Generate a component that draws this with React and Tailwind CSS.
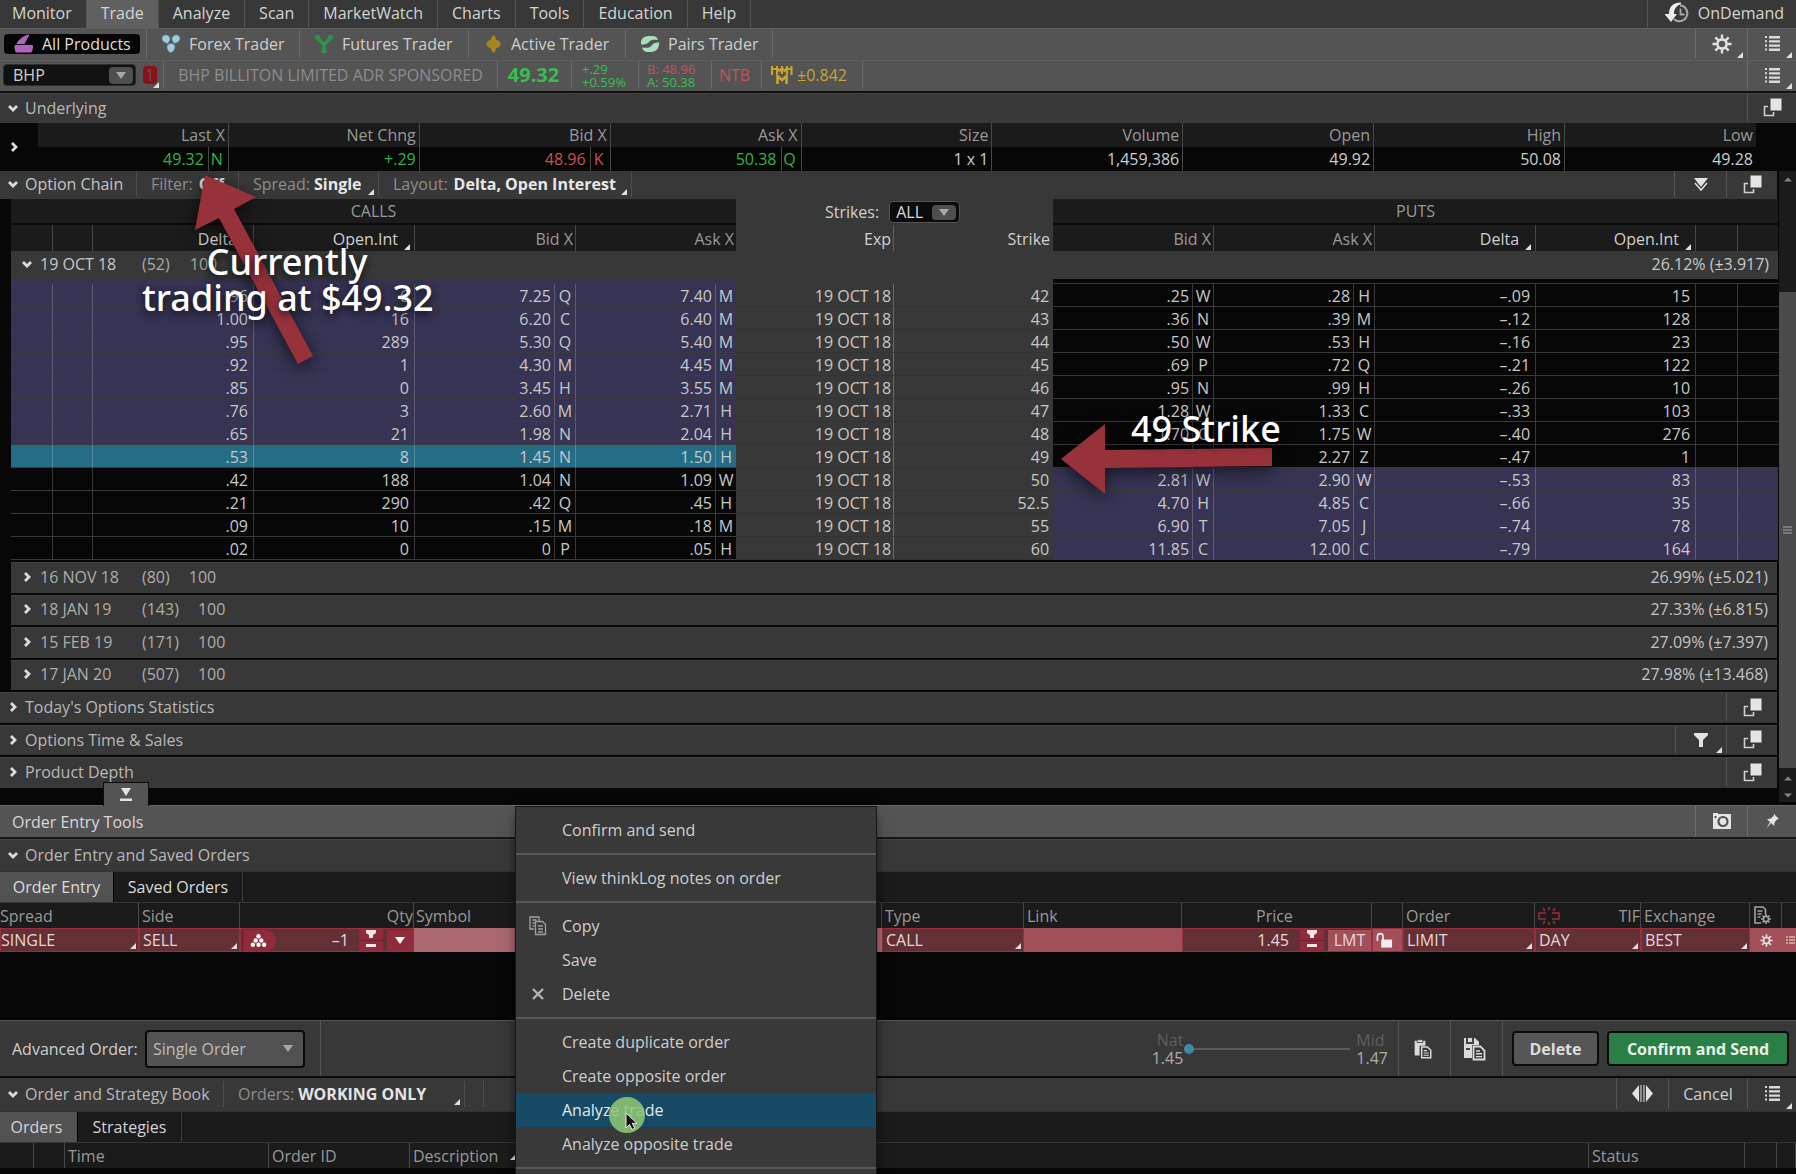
import { useState } from "react"
import clsx from "clsx"

const MENU = ["Monitor", "Trade", "Analyze", "Scan", "MarketWatch", "Charts", "Tools", "Education", "Help"]

const QUOTE = [
  { label: "Last X", value: "49.32", ex: "N", color: "text-[#35b34a]" },
  { label: "Net Chng", value: "+.29", color: "text-[#35b34a]" },
  { label: "Bid X", value: "48.96", ex: "K", color: "text-[#c8505c]" },
  { label: "Ask X", value: "50.38", ex: "Q", color: "text-[#35b34a]" },
  { label: "Size", value: "1 x 1" },
  { label: "Volume", value: "1,459,386" },
  { label: "Open", value: "49.92" },
  { label: "High", value: "50.08" },
  { label: "Low", value: "49.28" },
]

// delta, open int, bid, x, ask, x | strike | bid, x, ask, x, delta, open int
const CHAIN = [
  [".96", "6", "7.25", "Q", "7.40", "M", "42", ".25", "W", ".28", "H", "–.09", "15"],
  ["1.00", "16", "6.20", "C", "6.40", "M", "43", ".36", "N", ".39", "M", "–.12", "128"],
  [".95", "289", "5.30", "Q", "5.40", "M", "44", ".50", "W", ".53", "H", "–.16", "23"],
  [".92", "1", "4.30", "M", "4.45", "M", "45", ".69", "P", ".72", "Q", "–.21", "122"],
  [".85", "0", "3.45", "H", "3.55", "M", "46", ".95", "N", ".99", "H", "–.26", "10"],
  [".76", "3", "2.60", "M", "2.71", "H", "47", "1.28", "W", "1.33", "C", "–.33", "103"],
  [".65", "21", "1.98", "N", "2.04", "H", "48", "1.70", "C", "1.75", "W", "–.40", "276"],
  [".53", "8", "1.45", "N", "1.50", "H", "49", "", "", "2.27", "Z", "–.47", "1"],
  [".42", "188", "1.04", "N", "1.09", "W", "50", "2.81", "W", "2.90", "W", "–.53", "83"],
  [".21", "290", ".42", "Q", ".45", "H", "52.5", "4.70", "H", "4.85", "C", "–.66", "35"],
  [".09", "10", ".15", "M", ".18", "M", "55", "6.90", "T", "7.05", "J", "–.74", "78"],
  [".02", "0", "0", "P", ".05", "H", "60", "11.85", "C", "12.00", "C", "–.79", "164"],
]

const EXPIRATIONS = [
  { date: "16 NOV 18", days: "(80)", iv: "26.99% (±5.021)" },
  { date: "18 JAN 19", days: "(143)", iv: "27.33% (±6.815)" },
  { date: "15 FEB 19", days: "(171)", iv: "27.09% (±7.397)" },
  { date: "17 JAN 20", days: "(507)", iv: "27.98% (±13.468)" },
]

function Chevron({ open }) {
  return (
    <svg width="10" height="10" viewBox="0 0 10 10" fill="none" stroke="#dcdcdc" strokeWidth="2.8" className="shrink-0">
      {open ? <path d="M1 3l4 4 4-4" /> : <path d="M3 1l4 4-4 4" />}
    </svg>
  )
}

function Corner({ className }) {
  return (
    <svg width="6" height="6" viewBox="0 0 6 6" fill="#e0e0e0" className={clsx("shrink-0", className)}>
      <path d="M6 0v6H0z" />
    </svg>
  )
}

function Down({ fill = "#a8a8a8" }) {
  return (
    <svg width="10" height="7" viewBox="0 0 10 7" fill={fill}>
      <path d="M0 0h10L5 7z" />
    </svg>
  )
}

function PopOut() {
  return (
    <svg width="19" height="19" viewBox="0 0 19 19">
      <path d="M5 8.5H1.5v9h9V14" fill="none" stroke="#cfcfcf" strokeWidth="1.6" />
      <path d="M7.5 0.5h11v12h-11z" fill="#e4e4e4" />
    </svg>
  )
}

function ListIcon() {
  return (
    <svg width="15" height="15" viewBox="0 0 15 15" fill="#d9d9d9">
      <path d="M0 0h2v2H0zM4 0h11v2.4H4zM0 4.2h2v2H0zM4 4.2h11v2.4H4zM0 8.4h2v2H0zM4 8.4h11v2.4H4zM0 12.6h2v2H0zM4 12.6h11V15H4z" />
    </svg>
  )
}

function Gear({ size = 20 }) {
  return (
    <svg width={size} height={size} viewBox="0 0 20 20" fill="none" stroke="#e4e4e4">
      <circle cx="10" cy="10" r="4.6" strokeWidth="2.6" />
      <path
        strokeWidth="2.4"
        d="M10 .5v4M10 15.5v4M.5 10h4M15.5 10h4M3.3 3.3l2.8 2.8M13.9 13.9l2.8 2.8M3.3 16.7l2.8-2.8M13.9 6.1l2.8-2.8"
      />
    </svg>
  )
}

function PotIcon() {
  return (
    <svg width="20" height="19" viewBox="0 0 20 19" fill="#b063c0">
      <path d="M2.5 10C3 7 9 2 14 0.5c1-.3 1.5.3 1 1.2L11.500 8l-1 2z" />
      <path d="M2 11h15.500c1.200 0 1.800.6 1.600 2l-.7 3.500c-.3 1.400-1 2-2.300 2H3.200c-1.300 0-2-.6-2.200-2L.5 13C.4 11.600.9 11 2 11z" />
    </svg>
  )
}

function ForexIcon() {
  return (
    <svg width="20" height="19" viewBox="0 0 20 19" fill="#9ccbe4" stroke="#6c8795" strokeWidth=".6">
      <path d="M4.700 1C7.300 1 9 2.700 9 5c0 1.600-1.300 3-2.200 4.300C5 9.500 1 7.500 1 4.600 1 2.600 2.600 1 4.700 1z" />
      <path d="M15.300 1C12.700 1 11 2.700 11 5c0 1.600 1.300 3 2.200 4.300C15 9.500 19 7.500 19 4.600 19 2.600 17.400 1 15.300 1z" />
      <path d="M10 9.500c2.300 0 4 1.500 4 3.400 0 2.200-2.600 5.600-4.300 5.600S6 15 6 12.900c0-1.900 1.700-3.400 4-3.400z" />
    </svg>
  )
}

function FuturesIcon() {
  return (
    <svg width="20" height="20" viewBox="0 0 20 20" fill="#2f9450" stroke="#2f9450">
      <path d="M3.500 4L10 10.500 16.500 4M10 10v7" strokeWidth="3.400" fill="none" />
      <circle cx="3.300" cy="3.200" r="2.500" stroke="none" />
      <circle cx="16.700" cy="3.200" r="2.500" stroke="none" />
      <circle cx="10" cy="17" r="2.600" stroke="none" />
    </svg>
  )
}

function ActiveIcon() {
  return (
    <svg width="15" height="18" viewBox="0 0 15 18" fill="#a58424">
      <path d="M7.500 0l2 2 .5 2.500 3 1.500L15 9l-2 3-3 1.500L9.500 16l-2 2-2-2L5 13.500 2 12 0 9l2-3 3-1.500L5.500 2z" />
    </svg>
  )
}

function PairsIcon() {
  return (
    <svg width="20" height="18" viewBox="0 0 20 18">
      <path d="M1 9.500C.2 4 4 1 9 1h3c3.500 0 5.500 1.500 6 4-4-.7-7-.5-8.700 1.500C8 8.200 6 9.700 1 9.500z" fill="#a8e0bd" />
      <path d="M19 7.500c.8 5.500-3 9.500-8 9.500H8c-3.500 0-5.500-2-6-4.500 4 .7 7.500.5 9.200-1.500 1.500-1.900 3-3.500 7.800-3.500z" fill="#a8e0bd" />
    </svg>
  )
}

function OnDemandIcon() {
  return (
    <svg width="26" height="22" viewBox="0 0 26 22" fill="none">
      <path d="M16 3.200a8 8 0 1 1-6 14" stroke="#a9a9a9" strokeWidth="2" />
      <path d="M16.500 6.500v6h4" stroke="#a9a9a9" strokeWidth="1.800" />
      <path d="M17 .5C9 .5 5 4.500 5 12H.5l6.500 8 6-8H10c0-5 2-8 7-10z" fill="#ececec" />
    </svg>
  )
}

function Docs({ save }) {
  return (
    <svg width="19" height="24" viewBox="0 0 23 24" fill="none" className={save ? "w-[23px]" : "w-[19px]"}>
      <path d={save ? "M1 1h11l4 4v3H9v13H1z" : "M2 2h13v6H8v12H2z"} fill="#dadada" />
      {save ? (
        <path d="M4 1v5h6V1M3 12h4" stroke="#444" strokeWidth="2" />
      ) : (
        <path d="M5 .8h7v3.400H5z" fill="#dadada" stroke="#3a3a3a" />
      )}
      <path d="M10.500 9.500h7l4 4v9h-11z" fill="#3a3a3a" stroke="#dadada" strokeWidth="1.800" />
      <path d="M13 14h4M13 16.800h6M13 19.600h6" stroke="#dadada" strokeWidth="1.400" />
    </svg>
  )
}

function PlusMinus() {
  return (
    <span className="flex h-[22px] w-6 flex-col gap-px bg-[#73202e]">
      <span className="flex flex-1 items-center justify-center bg-[#8f2b3a]">
        <svg width="10" height="8" viewBox="0 0 10 8" fill="#f0e4e6">
          <path d="M0 0h10v3L7 5v3H3V5L0 3z" />
        </svg>
      </span>
      <span className="flex flex-1 items-center justify-center bg-[#8f2b3a]">
        <span className="h-[3px] w-[10px] bg-[#f0e4e6]" />
      </span>
    </span>
  )
}

// small icon box at the right end of a bar
function BarButton({ label, children, corner, className }) {
  return (
    <button
      aria-label={label}
      className={clsx("relative flex items-center justify-center self-stretch border-l border-white/15", className)}
    >
      {children}
      {corner && <Corner className="absolute right-1 bottom-0" />}
    </button>
  )
}

function Gadget({ title, open, children }) {
  return (
    <div className="flex items-center border-t border-[#444] bg-[#383838] pb-0.5 pl-2 text-[#b8b8b8]">
      <Chevron open={open} />
      <span className="ml-[7px]">{title}</span>
      <span className="flex-1" />
      {children}
    </div>
  )
}

function TopBars() {
  const [symbol, setSymbol] = useState("BHP")

  return (
    <header>
      <nav className="flex h-7 items-stretch bg-[#383838]">
        {MENU.map((item) => (
          <a
            key={item}
            href="#"
            className={clsx(
              "flex items-center border-r border-[#555] px-3.5 pb-0.5 text-[#d4d4d4] first:pl-3",
              item === "Trade" && "bg-[#606060]"
            )}
          >
            {item}
          </a>
        ))}
        <a href="#" className="ml-auto flex items-center gap-2 border-l border-[#555] pr-3 pb-0.5 pl-4 text-[#d4d4d4]">
          <OnDemandIcon />
          OnDemand
        </a>
      </nav>

      <div className="flex h-8 items-center border-t border-[#5e5e5e] bg-[#545454] pb-0.5 text-[#cfcfcf]">
        <button className="mr-1.5 ml-1 flex h-5 w-[136px] items-center gap-2 rounded bg-[#060606] pl-2.5 text-[#dedede]">
          <PotIcon />
          All Products
        </button>
        <button className="flex h-7 w-[153px] items-center gap-2 border-l border-[#6b6b6b] pl-3.5">
          <ForexIcon />
          Forex Trader
        </button>
        <button className="flex h-7 w-[169px] items-center gap-2 border-l border-[#6b6b6b] pl-3.5">
          <FuturesIcon />
          Futures Trader
        </button>
        <button className="flex h-7 w-[157px] items-center gap-2.5 border-l border-[#6b6b6b] pl-[17px]">
          <ActiveIcon />
          Active Trader
        </button>
        <button className="flex h-7 w-[148px] items-center gap-2 border-x border-[#6b6b6b] pl-3.5">
          <PairsIcon />
          Pairs Trader
        </button>
        <span className="flex-1" />
        <BarButton label="Settings" corner className="w-[52px]">
          <Gear />
        </BarButton>
        <BarButton label="Toolbar menu" corner className="w-[49px]">
          <ListIcon />
        </BarButton>
      </div>

      <div className="flex h-[33px] items-center border-t border-b-2 border-t-[#5e5e5e] border-b-[#121212] bg-[#545454] pb-0.5">
        <div className="ml-[3px] flex h-[22px] w-[133px] items-center rounded-sm border border-[#2c2c2c] bg-[#111] pr-0.5">
          <input
            aria-label="Symbol"
            value={symbol}
            onChange={(e) => setSymbol(e.target.value)}
            className="w-0 flex-1 bg-transparent pl-[9px] text-[#cfcfcf] outline-none"
          />
          <button aria-label="Recent symbols" className="flex h-[17px] w-6 items-center justify-center rounded-sm bg-[#4f4f4f]">
            <Down />
          </button>
        </div>
        <button className="relative ml-[7px] h-[18px] w-[14px] rounded-sm bg-[#8c1119] leading-[18px] text-[#565656]">
          1
          <Corner className="absolute -right-0.5 -bottom-1" />
        </button>
        <span className="ml-1.5 w-[334px] border-l border-[#6b6b6b] text-center leading-7 text-[#8d8d8d]">
          BHP BILLITON LIMITED ADR SPONSORED
        </span>
        <span className="w-[74px] border-l border-[#6b6b6b] pr-0.5 text-center text-xl leading-7 font-bold text-[#38bd50]">
          49.32
        </span>
        <span className="h-7 w-[67px] border-l border-[#6b6b6b] pt-0.5 pl-2.5 text-[13px] leading-[13px] text-[#38bd50]">
          +.29
          <br />
          +0.59%
        </span>
        <span className="h-7 w-[73px] border-l border-[#6b6b6b] pt-0.5 pl-2 text-[13px] leading-[13px] text-[#38bd50]">
          <span className="text-[#c8505c]">B: 48.96</span>
          <br />
          A: 50.38
        </span>
        <span className="w-[50px] border-l border-[#6b6b6b] pr-1 text-center leading-7 text-[#c8505c]">NTB</span>
        <span className="flex h-7 w-[102px] items-center gap-1 border-x border-[#6b6b6b] pl-2 text-[#c9a52c]">
          <svg width="23" height="18" viewBox="0 0 23 18" fill="none" stroke="#c9a52c" strokeWidth="2">
            <path d="M2 0v9M2 3h5M7 0v8M7 2l2.500 3L12 2M12 0v8M12 2l2.500 3L17 2M17 0v8M17 3h4.500M21.500 0v9" />
            <path d="M7.500 18v-8l4.500 4 4.500-4v8" strokeWidth="2.600" />
          </svg>
          ±0.842
        </span>
        <span className="flex-1" />
        <BarButton label="Symbol menu" corner className="w-[49px]">
          <ListIcon />
        </BarButton>
      </div>
    </header>
  )
}

function Underlying() {
  return (
    <section>
      <div className="grid h-[30px]">
        <Gadget title="Underlying" open>
          <BarButton label="Detach" className="w-[49px]">
            <PopOut />
          </BarButton>
        </Gadget>
      </div>
      <div className="flex bg-[#070707]">
        <button aria-label="Expand quote" className="flex w-[38px] items-center pl-[9px]">
          <Chevron />
        </button>
        <div className="min-w-0 flex-1">
          <table className="w-full table-fixed border-separate border-spacing-0 text-right">
            <thead>
              <tr className="h-6 bg-[#1b1b1b] text-[#999]">
                {QUOTE.map((q) => (
                  <th key={q.label} className="border-r border-[#484848] p-0 pr-[3px] font-normal last:border-r-0">
                    {q.label}
                  </th>
                ))}
              </tr>
            </thead>
            <tbody>
              <tr className="h-6 text-[#cdcdcd]">
                {QUOTE.map((q) => (
                  <td
                    key={q.label}
                    className={clsx("border-r border-[#484848] p-0 pr-[3px] leading-6 last:border-r-0", q.color)}
                  >
                    {q.value}
                    {q.ex && (
                      <span className="ml-1 inline-block w-[17px] border-l border-[#484848] text-center">{q.ex}</span>
                    )}
                  </td>
                ))}
              </tr>
            </tbody>
          </table>
        </div>
        <span className="w-10" />
      </div>
    </section>
  )
}

function ChainRow({ row }) {
  const strike = Number(row[6])
  const callBg = strike === 49 ? "bg-[#256d86]" : strike < 49 ? "bg-[#363353]" : "bg-[#070707]"
  const putBg = strike > 49 ? "bg-[#363353]" : "bg-[#070707]"
  const side = "border-r border-b border-r-white/20 p-0 pt-0.5"
  const call = clsx(side, callBg, strike > 49 ? "border-b-[#3a3a3a]" : "border-b-[#3a3a3f]")
  const put = clsx(side, putBg, "border-b-[#3a3a3a]")
  const mid = "border-b border-b-[#333] bg-[#383838] p-0 pt-0.5"

  return (
    <tr className="h-[23px]">
      <td className={call} />
      <td className={call} />
      <td className={clsx(call, "pr-[5px]")}>{row[0]}</td>
      <td className={clsx(call, "pr-[5px]")}>{row[1]}</td>
      <td className={clsx(call, "pr-[3px]")}>{row[2]}</td>
      <td className={clsx(call, "text-center")}>{row[3]}</td>
      <td className={clsx(call, "pr-[3px]")}>{row[4]}</td>
      <td className={clsx(call, "border-r-0 text-center")}>{row[5]}</td>
      <td className={clsx(mid, "border-r border-r-white/25 pr-0.5")}>19 OCT 18</td>
      <td className={clsx(mid, "pr-1")}>{row[6]}</td>
      <td className={clsx(put, "pr-[3px]")}>{row[7]}</td>
      <td className={clsx(put, "text-center")}>{row[8]}</td>
      <td className={clsx(put, "pr-[3px]")}>{row[9]}</td>
      <td className={clsx(put, "text-center")}>{row[10]}</td>
      <td className={clsx(put, "pr-[5px]")}>{row[11]}</td>
      <td className={clsx(put, "pr-[5px]")}>{row[12]}</td>
      <td className={put} />
      <td className={clsx(put, "border-r-0")} />
    </tr>
  )
}

function OptionChain() {
  const [strikes, setStrikes] = useState("ALL")
  const dark = "border-r border-[#484848] bg-[#1b1b1b] p-0 pt-0.5 pr-0.5 font-normal"

  return (
    <>
      <div className="flex h-7 items-center bg-[#383838] pb-0.5 pl-2 text-[#c4c4c4]">
        <Chevron open />
        <span className="ml-[7px] w-[111px]">Option Chain</span>
        <button className="flex h-[26px] w-[102px] items-center gap-1.5 border-l border-[#4e4e4e] pl-3.5 text-[#8e8e8e]">
          Filter: <b className="text-[#e4e4e4]">Off</b>
        </button>
        <button className="relative flex h-[26px] w-[140px] items-center gap-1 border-l border-[#4e4e4e] pl-3.5 text-[#8e8e8e]">
          Spread: <b className="text-[#e8e8e8]">Single</b>
          <Corner className="absolute right-1 bottom-0.5" />
        </button>
        <button className="relative flex h-[26px] w-[254px] items-center gap-1.5 border-x border-[#4e4e4e] pl-3.5 whitespace-nowrap text-[#8e8e8e]">
          Layout: <b className="text-[#e8e8e8]">Delta, Open Interest</b>
          <Corner className="absolute right-1 bottom-0.5" />
        </button>
        <span className="flex-1" />
        <BarButton label="Collapse all" className="w-[52px]">
          <svg width="16" height="15" viewBox="0 0 16 15">
            <path d="M1 1h14L8 10z" fill="#e2e2e2" />
            <path d="M2 6l6 7 6-7" fill="none" stroke="#e2e2e2" strokeWidth="1.500" />
          </svg>
        </BarButton>
        <BarButton label="Detach" className="w-[51px]">
          <PopOut />
        </BarButton>
      </div>

      <div className="pl-[11px]">
        <table className="w-full table-fixed border-separate border-spacing-0 text-right text-[#c8c8c8]">
          <colgroup>
            <col className="w-[42px]" />
            <col className="w-10" />
            <col className="w-[161px]" />
            <col className="w-[161px]" />
            <col className="w-[140px]" />
            <col className="w-[21px]" />
            <col className="w-[140px]" />
            <col className="w-5" />
            <col className="w-[158px]" />
            <col className="w-[159px]" />
            <col className="w-[140px]" />
            <col className="w-[21px]" />
            <col className="w-[140px]" />
            <col className="w-[21px]" />
            <col className="w-[161px]" />
            <col className="w-[160px]" />
            <col className="w-[42px]" />
            <col className="w-10" />
          </colgroup>
          <thead>
            <tr className="h-[26px] text-center text-[#999]">
              <th colSpan={8} className="border-b-2 border-[#0c0c0c] bg-[#1b1b1b] p-0 font-normal">
                CALLS
              </th>
              <th colSpan={2} className="bg-[#383838] p-0 font-normal text-[#d0d0d0]">
                <div className="flex items-center justify-center gap-2.5 pr-1">
                  <label htmlFor="strikes">Strikes:</label>
                  <span className="relative flex items-center">
                    <select
                      id="strikes"
                      value={strikes}
                      onChange={(e) => setStrikes(e.target.value)}
                      className="h-[22px] w-[71px] appearance-none rounded-sm border border-[#555] bg-[#0b0b0b] pl-1.5 leading-5 text-[#dcdcdc]"
                    >
                      <option>ALL</option>
                      <option>10</option>
                      <option>4</option>
                    </select>
                    <span className="pointer-events-none absolute right-1 flex h-[15px] w-6 items-center justify-center rounded-sm bg-[#4f4f4f]">
                      <Down />
                    </span>
                  </span>
                </div>
              </th>
              <th colSpan={8} className="border-b-2 border-[#0c0c0c] bg-[#1b1b1b] p-0 font-normal">
                PUTS
              </th>
            </tr>
            <tr className="h-[26px] text-[#999]">
              <th className={dark} />
              <th className={dark} />
              <th className={clsx(dark, "text-[#cfcfcf]")}>
                Delta
                <Corner className="mr-0.5 ml-1.5 inline align-text-bottom" />
              </th>
              <th className={clsx(dark, "text-[#cfcfcf]")}>
                Open.Int
                <Corner className="mr-0.5 ml-1.5 inline align-text-bottom" />
              </th>
              <th colSpan={2} className={dark}>Bid X</th>
              <th colSpan={2} className={clsx(dark, "border-r-0")}>Ask X</th>
              <th className="border-r border-[#606060] bg-[#383838] p-0 pt-0.5 pr-0.5 font-normal text-[#d0d0d0]">Exp</th>
              <th className="bg-[#383838] p-0 pt-0.5 pr-[3px] font-normal text-[#d0d0d0]">Strike</th>
              <th colSpan={2} className={dark}>Bid X</th>
              <th colSpan={2} className={dark}>Ask X</th>
              <th className={clsx(dark, "text-[#cfcfcf]")}>
                Delta
                <Corner className="mr-0.5 ml-1.5 inline align-text-bottom" />
              </th>
              <th className={clsx(dark, "text-[#cfcfcf]")}>
                Open.Int
                <Corner className="mr-0.5 ml-1.5 inline align-text-bottom" />
              </th>
              <th className={dark} />
              <th className={clsx(dark, "border-r-0")} />
            </tr>
          </thead>
          <tbody>
            <tr className="h-7">
              <td colSpan={18} className="bg-[#383838] p-0 pb-0.5">
                <div className="flex items-center pr-[9px] pl-[11px]">
                  <Chevron open />
                  <span className="ml-2 w-[102px] text-left">19 OCT 18</span>
                  <span className="text-[#a9a9a9]">(52)</span>
                  <span className="ml-5 text-[#a9a9a9]">100</span>
                  <span className="ml-auto">26.12% (±3.917)</span>
                </div>
              </td>
            </tr>
            <tr className="h-[5px]">
              <td colSpan={8} className="border-b border-[#3a3a3f] bg-[#363353] p-0" />
              <td colSpan={2} className="bg-[#383838] p-0" />
              <td colSpan={8} className="border-b border-[#3a3a3a] bg-[#070707] p-0" />
            </tr>
            {CHAIN.map((row) => (
              <ChainRow key={row[6]} row={row} />
            ))}
          </tbody>
        </table>
      </div>

      <div className="mt-0.5 grid h-[226px] auto-rows-fr gap-0.5">
        {EXPIRATIONS.map((e) => (
          <div
            key={e.date}
            className="ml-[11px] flex items-center border-t border-[#424242] bg-[#383838] pr-[9px] pb-0.5 pl-[11px] text-[#adadad]"
          >
            <Chevron />
            <span className="ml-2 w-[102px]">{e.date}</span>
            <span>{e.days}</span>
            <span className="ml-[19px]">100</span>
            <span className="ml-auto text-[#c4c4c4]">{e.iv}</span>
          </div>
        ))}
        <Gadget title="Today's Options Statistics">
          <BarButton label="Detach" className="w-[51px]">
            <PopOut />
          </BarButton>
        </Gadget>
        <Gadget title="Options Time & Sales">
          <BarButton label="Filter" corner className="w-[51px]">
            <svg width="14" height="14" viewBox="0 0 14 14" fill="#e2e2e2">
              <path d="M0 0h14v2L9 7v7H5V7L0 2z" />
            </svg>
          </BarButton>
          <BarButton label="Detach" className="w-[51px]">
            <PopOut />
          </BarButton>
        </Gadget>
        <Gadget title="Product Depth">
          <BarButton label="Detach" className="w-[51px]">
            <PopOut />
          </BarButton>
        </Gadget>
      </div>
    </>
  )
}

function ScrollBar() {
  const up = "M0 5h10L5 0z"
  const down = "M0 0h10L5 5z"
  return (
    <div className="ml-0.5 flex w-[17px] flex-col items-center bg-[#1b1b1b] pt-1.5">
      <svg width="8" height="5" viewBox="0 0 10 5" fill="#858585"><path d={up} /></svg>
      <div className="mt-[110px] flex w-full flex-1 items-center justify-center bg-[#4b4b4b]">
        <svg width="9" height="8" viewBox="0 0 9 8" stroke="#888" strokeWidth="1.500"><path d="M0 1h9M0 4h9M0 7h9" /></svg>
      </div>
      <div className="flex h-[34px] flex-col items-center justify-between pt-2 pb-1">
        <svg width="8" height="5" viewBox="0 0 10 5" fill="#858585"><path d={up} /></svg>
        <svg width="8" height="5" viewBox="0 0 10 5" fill="#858585"><path d={down} /></svg>
      </div>
    </div>
  )
}

function OrderEntry() {
  const [type, setType] = useState("Single Order")
  const [price, setPrice] = useState(0)
  const th = "border-r border-[#484848] p-0 text-left font-normal last:border-r-0"
  const cell = "relative border border-[#95303d] bg-[#643036] p-0"

  return (
    <section>
      <div className="relative flex h-[34px] items-center border-t border-b-2 border-t-[#666] border-b-[#161616] bg-[#545454] pl-3 text-[#d8d8d8]">
        <button
          aria-label="Collapse order entry"
          className="absolute -top-6 left-[103px] flex h-6 w-[46px] items-center justify-center border border-b-0 border-[#0c0c0c] bg-[#545454]"
        >
          <svg width="12" height="14" viewBox="0 0 12 14" fill="#e4e4e4">
            <path d="M1 0h10L6 8zM0 10.500h12V13H0z" />
          </svg>
        </button>
        <span className="flex-1">Order Entry Tools</span>
        <BarButton label="Snapshot" className="w-[52px]">
          <svg width="20" height="17" viewBox="0 0 20 17">
            <path d="M1 2V0h5v1h13v15H1z" fill="#e4e4e4" />
            <circle cx="11" cy="8.500" r="4.500" fill="none" stroke="#505050" strokeWidth="2.200" />
            <path d="M2.500 3h2v2h-2z" fill="#505050" />
          </svg>
        </BarButton>
        <BarButton label="Pin" className="w-[49px]">
          <svg width="13" height="15" viewBox="0 0 13 15" fill="#e4e4e4">
            <path d="M8 0l5 5-2 .5L8.500 8.500 8.200 12 5 9l-4.500 5.500L4 8 1 5l3.500-.3L7.500 2z" />
          </svg>
        </BarButton>
      </div>
      <div className="grid h-8">
        <Gadget title="Order Entry and Saved Orders" open />
      </div>
      <div className="flex h-8 items-stretch border-y border-[#333] bg-[#1b1b1b] text-[#dcdcdc]">
        <button className="w-[114px] border-r border-black bg-[#525252]">Order Entry</button>
        <button className="w-[129px] border-r border-[#3c3c3c]">Saved Orders</button>
      </div>
      <div className="h-[117px] bg-[#070707]">
        <table className="w-full table-fixed border-separate border-spacing-0">
          <colgroup>
            <col className="w-[139px]" />
            <col className="w-[101px]" />
            <col className="w-[174px]" />
            <col className="w-[105px]" />
            <col className="w-[363px]" />
            <col className="w-[142px]" />
            <col className="w-[158px]" />
            <col className="w-[190px]" />
            <col className="w-[31px]" />
            <col className="w-[132px]" />
            <col className="w-[106px]" />
            <col className="w-[109px]" />
            <col className="w-8" />
            <col className="w-[14px]" />
          </colgroup>
          <thead>
            <tr className="h-[25px] bg-[#1b1b1b] text-[#999]">
              <th className={th}>Spread</th>
              <th className={clsx(th, "pl-[3px]")}>Side</th>
              <th className={clsx(th, "text-right")}>Qty</th>
              <th className={clsx(th, "pl-0.5")}>Symbol</th>
              <th className={th} />
              <th className={clsx(th, "pl-[3px]")}>Type</th>
              <th className={clsx(th, "pl-[3px]")}>Link</th>
              <th className={clsx(th, "pl-[74px]")}>Price</th>
              <th className={th} />
              <th className={clsx(th, "pl-[3px]")}>Order</th>
              <th className={clsx(th, "pl-[3px]")}>
                <span className="flex items-center justify-between">
                  <svg width="22" height="18" viewBox="0 0 22 18" fill="none" stroke="#9e2c3a" strokeWidth="1.500">
                    <path d="M8 6H1v6h7M14 6h7v6h-7M5 1l2 3M11 0v3M17 1l-2 3M5 17l2-3M11 18v-3M17 17l-2-3" />
                  </svg>
                  TIF
                </span>
              </th>
              <th className={clsx(th, "pl-[3px]")}>Exchange</th>
              <th className={clsx(th, "pl-1")}>
                <svg width="18" height="19" viewBox="0 0 18 19" fill="none" stroke="#a2a2a2" strokeWidth="1.600">
                  <path d="M7 17H1V1h8l2.500 2.500V8M3.500 5h5M3.500 8h4M3.500 11h3" />
                  <circle cx="12" cy="13" r="2.600" />
                  <path d="M12 8v2M12 16v2M7 13h2M15 13h2M8.500 9.500L10 11M14 15l1.500 1.500M8.500 16.500L10 15M14 11l1.500-1.500" />
                </svg>
              </th>
              <th className={th} />
            </tr>
          </thead>
          <tbody>
            <tr className="h-[23px] text-[#e6d6d8]">
              <td className={cell}>
                SINGLE
                <Corner className="absolute right-0.5 bottom-0.5" />
              </td>
              <td className={clsx(cell, "pl-[3px]")}>
                SELL
                <Corner className="absolute right-0.5 bottom-0.5" />
              </td>
              <td className={clsx(cell, "pl-[3px]")}>
                <span className="flex items-center">
                  <span className="flex h-[21px] w-8 items-center rounded-r-xl bg-[#8f2b3a] pl-1.5">
                    <svg width="17" height="15" viewBox="0 0 18 15" fill="#fff">
                      <circle cx="9" cy="3" r="2.300" />
                      <circle cx="6" cy="7.500" r="2.300" />
                      <circle cx="12" cy="7.500" r="2.300" />
                      <circle cx="3" cy="12" r="2.300" />
                      <circle cx="9" cy="12" r="2.300" />
                      <circle cx="15" cy="12" r="2.300" />
                    </svg>
                  </span>
                  <span className="ml-auto">–1</span>
                  <span className="mr-1 ml-2.5"><PlusMinus /></span>
                  <span className="flex h-[21px] w-[26px] items-center justify-center bg-[#8f2b3a]"><Down fill="#fff" /></span>
                </span>
              </td>
              <td className="bg-[#ab6870] p-0" />
              <td className="bg-[#ab6870] p-0" />
              <td className={clsx(cell, "pl-[3px]")}>
                CALL
                <Corner className="absolute right-0.5 bottom-0.5" />
              </td>
              <td className="bg-[#a24f59] p-0" />
              <td className={cell}>
                <span className="flex items-center justify-end">
                  1.45
                  <span className="mr-1 ml-[11px]"><PlusMinus /></span>
                  <span className="h-[21px] w-[43px] bg-[#a24f59] text-center leading-[21px]">LMT</span>
                </span>
              </td>
              <td className="border border-[#95303d] bg-[#a24f59] p-0">
                <svg width="17" height="17" viewBox="0 0 18 17" className="ml-[3px]">
                  <path d="M1.500 9V4.500C1.500 0 7.500 0 7.500 4.500V8" fill="none" stroke="#eee" strokeWidth="1.800" />
                  <path d="M5.500 7.500H17V16H5.500z" fill="#eee" />
                </svg>
              </td>
              <td className={clsx(cell, "pl-[3px]")}>
                LIMIT
                <Corner className="absolute right-0.5 bottom-0.5" />
              </td>
              <td className={clsx(cell, "pl-[3px]")}>
                DAY
                <Corner className="absolute right-0.5 bottom-0.5" />
              </td>
              <td className={clsx(cell, "pl-[3px]")}>
                BEST
                <Corner className="absolute right-0.5 bottom-0.5" />
              </td>
              <td className="bg-[#a24f59] p-0">
                <span className="flex justify-center"><Gear size={13} /></span>
              </td>
              <td className="overflow-hidden bg-[#a24f59] p-0 pl-1">
                <svg width="9" height="9" viewBox="0 0 9 9" stroke="#eee" strokeWidth="1.200"><path d="M0 1h2M3 1h6M0 4h2M3 4h6M0 7h2M3 7h6" /></svg>
              </td>
            </tr>
          </tbody>
        </table>
      </div>

      <div className="flex h-[58px] items-center border-t border-b-2 border-t-[#555] border-b-[#0c0c0c] bg-[#383838] pl-3 text-[#cfcfcf]">
        <label htmlFor="advanced" className="w-[133px]">Advanced Order:</label>
        <span className="relative flex items-center">
          <select
            id="advanced"
            value={type}
            onChange={(e) => setType(e.target.value)}
            className="h-[38px] w-[160px] appearance-none rounded border-2 border-[#0a0a0a] bg-[#525252] pl-1.5 text-[#bdbdbd]"
          >
            <option>Single Order</option>
            <option>1st trgs Seq</option>
            <option>OCO</option>
          </select>
          <span className="pointer-events-none absolute right-3"><Down /></span>
        </span>
        <span className="ml-[15px] self-stretch border-l border-[#555]" />
        <span className="flex-1" />
        <span className="flex flex-col items-end leading-[18px]">
          <span className="text-[#5e5e5e]">Nat</span>
          <span className="text-[#adadad]">1.45</span>
        </span>
        <input
          type="range"
          aria-label="Price between natural and mid"
          min="0"
          max="100"
          value={price}
          onChange={(e) => setPrice(e.target.value)}
          className="ml-px w-[166px] appearance-none bg-transparent [&::-webkit-slider-runnable-track]:h-0.5 [&::-webkit-slider-runnable-track]:bg-[#5a5a5a] [&::-webkit-slider-thumb]:-mt-1 [&::-webkit-slider-thumb]:h-2.5 [&::-webkit-slider-thumb]:w-2.5 [&::-webkit-slider-thumb]:appearance-none [&::-webkit-slider-thumb]:rounded-full [&::-webkit-slider-thumb]:bg-[#3f88a8]"
        />
        <span className="mr-2.5 ml-1.5 flex flex-col leading-[18px]">
          <span className="text-[#5e5e5e]">Mid</span>
          <span className="text-[#adadad]">1.47</span>
        </span>
        <BarButton label="Copy orders" className="w-[52px] pr-1">
          <Docs />
        </BarButton>
        <BarButton label="Save orders" className="w-[52px] pr-1">
          <Docs save />
        </BarButton>
        <span className="self-stretch border-l border-white/15" />
        <button className="mr-2 ml-[9px] h-[35px] w-[87px] rounded border-2 border-[#0c0c0c] bg-[#565656] font-bold text-[#dedede]">
          Delete
        </button>
        <button className="mr-[7px] h-[35px] w-[182px] rounded border-2 border-[#0c0c0c] bg-[#2a7f49] font-bold text-[#e8f2ea]">
          Confirm and Send
        </button>
      </div>
    </section>
  )
}

function StrategyBook() {
  const th = "border-r border-[#484848] p-0 pl-[3px] text-left font-normal"
  return (
    <section>
      <div className="flex h-[33px] items-center bg-[#383838] pb-0.5 pl-2 text-[#b8b8b8]">
        <Chevron open />
        <span className="ml-[7px] w-[198px]">Order and Strategy Book</span>
        <button className="relative flex h-[26px] w-[242px] items-center gap-1 border-x border-[#4e4e4e] pl-3.5 text-[#8e8e8e]">
          Orders: <b className="text-[#e4e4e4]">WORKING ONLY</b>
          <Corner className="absolute right-1 bottom-0.5" />
        </button>
        <span className="ml-[18px] h-[26px] border-l border-[#4e4e4e]" />
        <span className="flex-1" />
        <BarButton label="Scroll columns" className="w-[52px]">
          <svg width="21" height="17" viewBox="0 0 21 17" fill="#e2e2e2">
            <path d="M7 0v17L0 8.500zM14 0v17L21 8.500zM8.500 0h1v17h-1zM11.500 0h1v17h-1z" />
          </svg>
        </BarButton>
        <BarButton className="w-[79px] text-[#d0d0d0]">Cancel</BarButton>
        <BarButton label="Book menu" corner className="w-[49px]">
          <ListIcon />
        </BarButton>
      </div>
      <div className="flex h-8 items-stretch border-y border-[#333] bg-[#1b1b1b] text-[#d4d4d4]">
        <button className="w-[78px] border-r border-black bg-[#525252] pr-1">Orders</button>
        <button className="w-[104px] border-r border-[#3c3c3c]">Strategies</button>
      </div>
      <table className="w-full table-fixed border-separate border-spacing-0">
        <colgroup>
          <col className="w-[34px]" />
          <col className="w-[31px]" />
          <col className="w-[204px]" />
          <col className="w-[141px]" />
          <col />
          <col className="w-[156px]" />
          <col className="w-8" />
          <col className="w-[19px]" />
        </colgroup>
        <thead>
          <tr className="h-[25px] bg-[#1b1b1b] text-[#999]">
            <th className={th} />
            <th className={th} />
            <th className={th}>Time</th>
            <th className={th}>Order ID</th>
            <th className={th}>
              Description
              <Corner className="ml-3 inline" />
            </th>
            <th className={th}>Status</th>
            <th className={th} />
            <th className={th} />
          </tr>
        </thead>
      </table>
    </section>
  )
}

function MenuItem({ icon, active, children }) {
  return (
    <button className={clsx("flex h-[34px] w-full items-center pl-[13px]", active && "bg-[#174a64] text-[#e0eaef]")}>
      <span className="w-[33px]">{icon}</span>
      {children}
    </button>
  )
}

function ContextMenu() {
  const group = "border-b-2 border-[#575757] py-1.5"
  return (
    <div className="absolute top-[806px] left-[515px] w-[362px] border border-[#161616] bg-[#393939] text-[#cecece] shadow-lg shadow-black/60">
      <div className={group}>
        <MenuItem>Confirm and send</MenuItem>
      </div>
      <div className={group}>
        <MenuItem>View thinkLog notes on order</MenuItem>
      </div>
      <div className={group}>
        <MenuItem
          icon={
            <svg width="18" height="20" viewBox="0 0 18 20" fill="none" stroke="#a0a0a0" strokeWidth="1.300">
              <path d="M5 13H1V1h9v4M3.500 4h4M3.500 7h2M3.500 10h2" />
              <path d="M6.500 5.500h7l3 3v10h-10zM9 10h5M9 13h5M9 16h5" />
            </svg>
          }
        >
          Copy
        </MenuItem>
        <MenuItem>Save</MenuItem>
        <MenuItem
          icon={
            <svg width="12" height="12" viewBox="0 0 12 12" stroke="#b4b4b4" strokeWidth="2.400" className="ml-[3px]">
              <path d="M1 1l10 10M11 1L1 11" />
            </svg>
          }
        >
          Delete
        </MenuItem>
      </div>
      <div className={group}>
        <MenuItem>Create duplicate order</MenuItem>
        <MenuItem>Create opposite order</MenuItem>
        <MenuItem active>Analyze trade</MenuItem>
        <MenuItem>Analyze opposite trade</MenuItem>
      </div>
      <div className="h-8" />
    </div>
  )
}

function Annotations() {
  return (
    <div className="pointer-events-none absolute inset-0 font-['Noto_Sans',sans-serif] text-4xl font-medium text-white">
      <svg width="1796" height="1174" className="absolute top-0 left-0 drop-shadow-[0_4px_8px_rgba(0,0,0,0.6)]" fill="#97313a">
        <path d="M205 175l51 22-22 12 79 147-15 8-79-146-24 12z" />
        <path d="M1061 459l44-35v26l167-2v18l-167 2v26z" />
      </svg>
      <p className="absolute top-[244px] left-[142px] w-[290px] text-center leading-9 whitespace-nowrap [text-shadow:0_3px_8px_rgba(0,0,0,0.8)]">
        Currently
        <br />
        trading at $49.32
      </p>
      <p className="absolute top-[411px] left-[1131px] leading-9 whitespace-nowrap [text-shadow:0_3px_8px_rgba(0,0,0,0.8)]">
        49 Strike
      </p>
      <svg width="36" height="40" viewBox="0 0 36 40" className="absolute top-[1096px] left-[609px]">
        <circle cx="18" cy="19" r="18" fill="#8fc573" fillOpacity=".88" />
        <path d="M17 17v15l3.500-3.500 2.500 5 2.800-1.400-2.600-4.800H28z" fill="#111" stroke="#eee" strokeWidth="1" />
      </svg>
    </div>
  )
}

export default function App() {
  return (
    <div className="relative h-screen overflow-hidden bg-[#070707] font-['Open_Sans','Noto_Sans',sans-serif] text-base leading-5">
      <TopBars />
      <Underlying />
      <div className="mb-[3px] flex">
        <main className="min-w-0 flex-1 pb-[14px]">
          <OptionChain />
        </main>
        <ScrollBar />
      </div>
      <OrderEntry />
      <StrategyBook />
      <ContextMenu />
      <Annotations />
    </div>
  )
}
